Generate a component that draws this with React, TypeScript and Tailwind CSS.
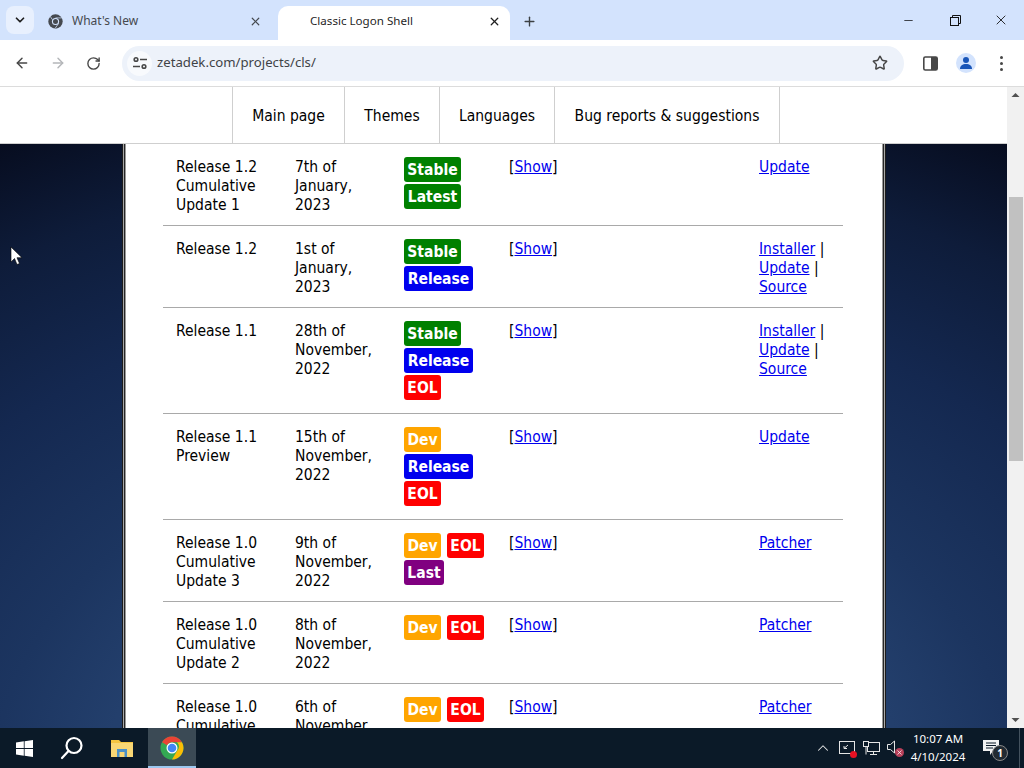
import React from "react";
import { ArrowLeft, ArrowRight, ChevronDown, ChevronUp, Minus, Plus, RotateCw, Star, X } from "lucide-react";

type B = "Stable" | "Latest" | "Release" | "Dev" | "EOL" | "Last";
const badgeClass: Record<B, string> = {
  Stable: "w-[57px] bg-[#008000]",
  Latest: "w-[57px] bg-[#008000]",
  Release: "w-[69px] bg-[#0000ee]",
  Dev: "w-[37px] bg-[#ffa500]",
  EOL: "w-[37px] bg-[#ff0000]",
  Last: "w-[40px] bg-[#800080]",
};

const rows: { name: string[]; date: string[]; badges: B[]; links: string[] }[] = [
  { name: ["Release 1.2", "Cumulative", "Update 1"], date: ["7th of", "January,", "2023"], badges: ["Stable", "Latest"], links: ["Update"] },
  { name: ["Release 1.2"], date: ["1st of", "January,", "2023"], badges: ["Stable", "Release"], links: ["Installer", "Update", "Source"] },
  { name: ["Release 1.1"], date: ["28th of", "November,", "2022"], badges: ["Stable", "Release", "EOL"], links: ["Installer", "Update", "Source"] },
  { name: ["Release 1.1", "Preview"], date: ["15th of", "November,", "2022"], badges: ["Dev", "Release", "EOL"], links: ["Update"] },
  { name: ["Release 1.0", "Cumulative", "Update 3"], date: ["9th of", "November,", "2022"], badges: ["Dev", "EOL", "Last"], links: ["Patcher"] },
  { name: ["Release 1.0", "Cumulative", "Update 2"], date: ["8th of", "November,", "2022"], badges: ["Dev", "EOL"], links: ["Patcher"] },
  { name: ["Release 1.0", "Cumulative", "Update 1"], date: ["6th of", "November,", "2022"], badges: ["Dev", "EOL"], links: ["Patcher"] },
];

const Link = ({ children }: { children: React.ReactNode }) => (
  <a className="text-[#0000ee] underline">{children}</a>
);

const Lines = ({ items }: { items: string[] }) => (
  <div>
    {items.map((t) => (
      <div key={t}>{t}</div>
    ))}
  </div>
);

function ChromeLogo({ size }: { size: number }) {
  return (
    <svg width={size} height={size} viewBox="0 0 48 48">
      <circle cx="24" cy="24" r="23" fill="#34a853" />
      <path d="M24 1a23 23 0 0 1 19.9 11.5H24a11.5 11.5 0 0 0-10 5.8L4.1 12.5A23 23 0 0 1 24 1z" fill="#ea4335" />
      <path d="M43.9 12.5A23 23 0 0 1 24 47l10-17.2a11.5 11.5 0 0 0 0-17.3z" fill="#fbbc05" />
      <circle cx="24" cy="24" r="11" fill="#fff" />
      <circle cx="24" cy="24" r="8.6" fill="#4285f4" />
    </svg>
  );
}

function MonoChrome() {
  return (
    <svg width="15" height="15" viewBox="0 0 48 48">
      <circle cx="24" cy="24" r="23" fill="#45494f" />
      <circle cx="24" cy="24" r="11.5" fill="#d3e3fd" />
      <circle cx="24" cy="24" r="8" fill="#45494f" />
      <path d="M24 12.5h20M14 18 4 3M34 30 22 47" stroke="#d3e3fd" strokeWidth="2.4" />
    </svg>
  );
}

export default function App() {
  return (
    <div className="relative flex h-[768px] w-[1024px] flex-col overflow-hidden bg-white font-['Noto_Sans',sans-serif]">
      {/* Tab strip */}
      <div className="flex h-10 shrink-0 items-end bg-[#d3e3fd]">
        <div className="mb-[6px] ml-[6px] flex h-7 w-7 items-center justify-center self-end rounded-lg bg-[#e8f0fe]">
          <ChevronDown size={14} strokeWidth={3} color="#1f1f1f" />
        </div>
        <div className="flex h-[34px] w-[244px] items-center pl-[14px] pr-[16px] pb-[4px]">
          <MonoChrome />
          <span className="ml-[9px] flex-1 text-[12px] text-[#45494f]">What's New</span>
          <X size={13} strokeWidth={2.2} color="#45494f" />
        </div>
        <div className="flex h-[34px] w-[232px] items-center rounded-t-[10px] bg-white pl-[32px] pr-[9px] pb-[4px]">
          <span className="flex-1 text-[11.6px] text-[#1f1f1f]">Classic Logon Shell</span>
          <X size={13} strokeWidth={2.4} color="#1f1f1f" />
        </div>
        <div className="flex h-[34px] w-[39px] items-center justify-center pb-[4px]">
          <Plus size={15} strokeWidth={2.2} color="#3c4043" />
        </div>
        <div className="flex-1" />
        <div className="mr-[1px] flex h-10 w-[46px] items-center justify-center">
          <Minus size={13} strokeWidth={1.4} color="#111" />
        </div>
        <div className="flex h-10 w-[46px] items-center justify-center">
          <svg width="11" height="11" viewBox="0 0 11 11" fill="none" stroke="#111" strokeWidth="1">
            <rect x="0.5" y="2.5" width="8" height="8" />
            <path d="M2.5 2.5v-2h8v8h-2" />
          </svg>
        </div>
        <div className="flex h-10 w-[46px] items-center justify-center">
          <X size={16} strokeWidth={1.3} color="#111" />
        </div>
      </div>

      {/* Toolbar */}
      <div className="flex h-[47px] shrink-0 items-center rounded-t-[8px] border-b border-[#dcdcdc] bg-white">
        <div className="flex w-[44px] justify-center">
          <ArrowLeft size={16} strokeWidth={2.2} color="#474747" />
        </div>
        <div className="flex w-[28px] justify-center">
          <ArrowRight size={16} strokeWidth={2.2} color="#b4b6b9" />
        </div>
        <div className="flex w-[43px] justify-center">
          <RotateCw size={15} strokeWidth={2.2} color="#474747" />
        </div>
        <div className="ml-[7px] flex h-[35px] w-[782px] items-center rounded-full bg-[#edf2fa] pl-[5px] pr-[16px]">
          <div className="flex h-[25px] w-[25px] items-center justify-center rounded-full bg-[#f8fafd]">
            <svg width="16" height="14" viewBox="0 0 16 14" fill="none" stroke="#474747" strokeWidth="1.6">
              <circle cx="4" cy="3.5" r="1.8" />
              <path d="M8 3.5h7M1 10.5h7" />
              <circle cx="12" cy="10.5" r="1.8" />
            </svg>
          </div>
          <span className="ml-[5px] flex-1 text-[13.2px] text-[#3f4347]">zetadek.com/projects/cls/</span>
          <Star size={16} strokeWidth={2.2} color="#474747" />
        </div>
        <div className="ml-[18px] flex w-[16px] justify-center">
          <svg width="15" height="15" viewBox="0 0 15 15">
            <rect x="0.8" y="1" width="13.4" height="13" rx="1.5" fill="#fff" stroke="#474747" strokeWidth="1.6" />
            <rect x="8" y="1" width="6" height="13" fill="#474747" />
          </svg>
        </div>
        <div className="ml-[18px] flex h-[20px] w-[20px] items-center justify-center rounded-full bg-[#d3e3fd]">
          <svg width="14" height="14" viewBox="0 0 14 14" fill="#1a56b8">
            <circle cx="7" cy="4" r="3" />
            <path d="M1 13c0-3.4 2.5-5 6-5s6 1.600 6 5z" />
          </svg>
        </div>
        <div className="ml-[24px] flex w-[4px] flex-col gap-[3px]">
          <span className="h-[3px] w-[3px] rounded-full bg-[#474747]" />
          <span className="h-[3px] w-[3px] rounded-full bg-[#474747]" />
          <span className="h-[3px] w-[3px] rounded-full bg-[#474747]" />
        </div>
      </div>

      {/* Viewport */}
      <div className="flex min-h-0 flex-1">
        <div className="flex min-w-0 flex-1 flex-col font-['DejaVu_Sans_Condensed','DejaVu_Sans',sans-serif] text-[15.5px] leading-[19px] text-black">
          <nav className="flex h-[57px] shrink-0 border-b border-[#cfcfcf] bg-white pl-[232px]">
            <div className="flex border-l border-[#cfcfcf]">
              {[
                ["Main page", "w-[112px]"],
                ["Themes", "w-[95px]"],
                ["Languages", "w-[115px]"],
                ["Bug reports & suggestions", "w-[225px]"],
              ].map(([t, w]) => (
                <div key={t} className={`flex items-center justify-center border-r border-[#cfcfcf] pt-[2px] ${w}`}>
                  {t}
                </div>
              ))}
            </div>
          </nav>
          <div className="min-h-0 flex-1 overflow-hidden bg-[radial-gradient(ellipse_110%_135%_at_50%_110%,#2b4878_0%,#233f6c_36%,#1c3560_46%,#142850_64%,#0e1c3a_80%,#070d20_93%,#040816_100%)]">
            <div className="ml-[122px] h-full w-[764px] border-x border-[#1c1c1c]">
              <div className="h-full border-x border-[#a9a9a9]">
                <div className="h-full border-x border-[#262626]">
                  <div className="h-full border-x border-[#9a9a9a] bg-white pl-[37px]">
                    <div className="w-[680px]">
                      {rows.map((r, i) => (
                        <div
                          key={i}
                          className="grid grid-cols-[119px_109px_105px_250px_1fr] border-b border-[#a9a9a9] pl-[13px] pt-[14px] pb-[10px]"
                        >
                          <Lines items={r.name} />
                          <Lines items={r.date} />
                          <div className="-mt-[1px] flex flex-wrap content-start gap-x-[6px] gap-y-[2px] pb-[3px]">
                            {r.badges.map((b) => (
                              <span
                                key={b}
                                className={`flex h-[25px] items-center justify-center rounded-[3px] pt-[2px] font-bold text-white ${badgeClass[b]}`}
                              >
                                {b}
                              </span>
                            ))}
                          </div>
                          <div>
                            [<Link>Show</Link>]
                          </div>
                          <div>
                            {r.links.map((l, j) => (
                              <div key={l}>
                                <Link>{l}</Link>
                                {j < r.links.length - 1 ? " |" : ""}
                              </div>
                            ))}
                          </div>
                        </div>
                      ))}
                    </div>
                  </div>
                </div>
              </div>
            </div>
          </div>
        </div>
        {/* Scrollbar */}
        <div className="flex w-[17px] shrink-0 flex-col items-center bg-[#f1f1f1]">
          <svg className="mt-[5px]" width="9" height="6" viewBox="0 0 9 6" fill="#505050">
            <path d="M4.5 1 8.500 5h-8z" />
          </svg>
          <div className="mt-[99px] h-[264px] w-[14px] bg-[#c1c1c1]" />
          <div className="flex-1" />
          <svg className="mb-[5px]" width="9" height="6" viewBox="0 0 9 6" fill="#505050">
            <path d="M.5 1h8l-4 4z" />
          </svg>
        </div>
      </div>

      {/* Taskbar */}
      <div className="flex h-10 shrink-0 items-center bg-[#0b1a28] font-['Noto_Sans',sans-serif] text-white">
        <div className="flex w-[48px] justify-center">
          <svg width="17" height="17" viewBox="0 0 17 17" fill="#fff">
            <path d="M0 2.400 7.800 1.300V8H0zM8.600 1.200 17 0v8H8.600zM0 8.900h7.800v6.800L0 14.600zM8.600 8.900H17V17l-8.400-1.200z" />
          </svg>
        </div>
        <div className="flex w-[48px] justify-center">
          <svg width="24" height="24" viewBox="0 0 24 24" fill="none" stroke="#fff" strokeWidth="2.200">
            <circle cx="14" cy="9.500" r="7.500" />
            <path d="M8.500 15 2 22" strokeLinecap="round" />
          </svg>
        </div>
        <div className="flex w-[52px] justify-center">
          <svg width="22" height="20" viewBox="0 0 22 20">
            <path d="M0 2h8l2 2h12v15H0z" fill="#f4c542" />
            <rect x="0" y="5" width="22" height="14" fill="#f8d775" />
            <rect x="6" y="11" width="10" height="8" fill="#4a90c8" />
            <rect x="8.500" y="14" width="5" height="5" fill="#f8d775" />
          </svg>
        </div>
        <div className="flex h-10 w-[48px] flex-col items-center justify-between bg-[#3b4a55]">
          <div className="mt-[8px]">
            <ChromeLogo size={24} />
          </div>
          <div className="h-[2px] w-full bg-[#9cc8f0]" />
        </div>
        <div className="flex-1" />
        <ChevronUp size={18} strokeWidth={1.4} color="#e5e5e5" />
        <div className="relative ml-[7px] h-[16px] w-[17px]">
          <svg width="17" height="15" viewBox="0 0 17 15" fill="none" stroke="#e5e5e5" strokeWidth="1">
            <rect x="0.500" y="1.500" width="15" height="12" />
            <path d="M5 8.500 9 5M5 8.500V6M5 8.500h3" />
          </svg>
          <span className="absolute bottom-[-2px] right-[-1px] h-[7px] w-[7px] rounded-full bg-[#e81123]" />
        </div>
        <svg className="ml-[7px]" width="17" height="15" viewBox="0 0 17 15" fill="none" stroke="#e5e5e5" strokeWidth="1">
          <rect x="4.500" y="1.500" width="12" height="9" />
          <rect x="0.500" y="0.500" width="5" height="5" fill="#0b1a28" />
          <path d="M10.500 10.500v3M7 13.500h7M3 5.500v8" />
        </svg>
        <div className="relative ml-[7px] h-[16px] w-[16px]">
          <svg width="10" height="14" viewBox="0 0 10 14" fill="none" stroke="#e5e5e5" strokeWidth="1">
            <path d="M.5 4.500h3L7.500 1v12l-4-3.500h-3z" />
          </svg>
          <span className="absolute bottom-[-1px] right-[-1px] flex h-[9px] w-[9px] items-center justify-center rounded-full bg-[#b8405a]">
            <X size={7} strokeWidth={2.5} color="#fff" />
          </span>
        </div>
        <div className="ml-[5px] flex w-[60px] flex-col items-center text-[11.5px] leading-[18px] text-white">
          <span>10:07 AM</span>
          <span>4/10/2024</span>
        </div>
        <div className="relative ml-[15px] h-[22px] w-[24px]">
          <svg width="16" height="16" viewBox="0 0 16 16" fill="#f2f2f2" className="mt-[3px]">
            <path d="M0 0h16v11h-6l-3 4v-4H0z" />
            <path d="M3 3h10M3 5.500h10M3 8h7" stroke="#0b1a28" strokeWidth="1" />
          </svg>
          <span className="absolute bottom-[-2px] right-[-1px] flex h-[16px] w-[16px] items-center justify-center rounded-full border border-[#888] bg-[#222b33] text-[10px] font-bold leading-none">
            1
          </span>
        </div>
        <div className="ml-[12px] mr-[4px] h-10 w-[1px] bg-[#44525e]" />
      </div>

      {/* Mouse pointer */}
      <svg className="absolute left-[10px] top-[246px]" width="13" height="20" viewBox="0 0 13 20">
        <path d="M1 1v15l3.500-3.500 2.500 6 2.500-1-2.500-5.800h5z" fill="#fff" stroke="#000" strokeWidth="0.600" />
      </svg>
    </div>
  );
}
